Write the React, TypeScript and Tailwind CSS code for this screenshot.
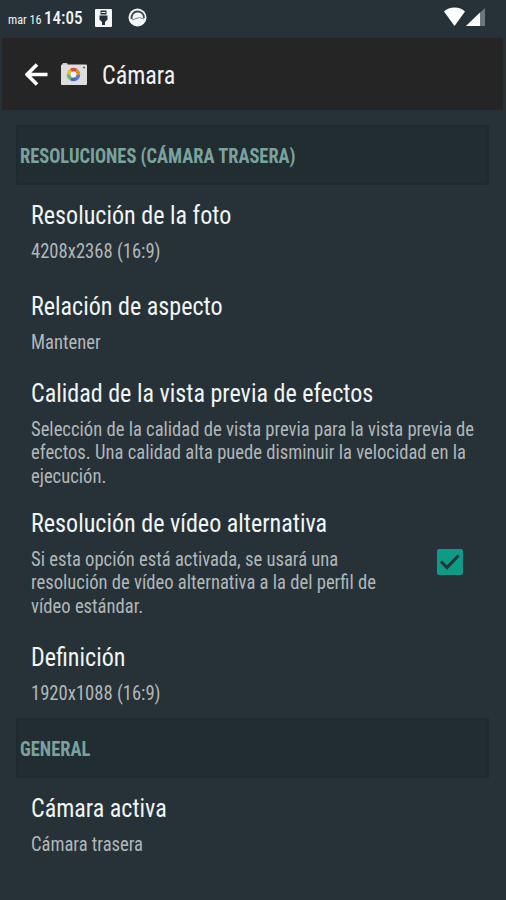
import type { ReactNode } from "react";

function Line({ children, className = "" }: { children: ReactNode; className?: string }) {
  return <span className={`block w-max origin-left whitespace-nowrap ${className}`}>{children}</span>;
}

function Section({ children }: { children: ReactNode }) {
  return (
    <div className="ml-4 flex h-[60px] w-[473px] items-center border-2 border-[#1f2a2f] bg-[#222d32] pl-[2px] pt-[1px] text-[20px] font-bold text-[#7aa39d]">
      <Line className="scale-x-[0.922]">{children}</Line>
    </div>
  );
}

type RowProps = {
  title: string;
  lines: string[];
  className?: string;
  children?: ReactNode;
};

function Row({ title, lines, className = "h-[91px] pt-4", children }: RowProps) {
  return (
    <div className={`flex justify-between pl-[31px] pr-[43px] ${className}`}>
      <div className="w-0">
        <Line className="scale-x-[0.963] text-[25px] leading-[30px] text-[#f1f5f5]">{title}</Line>
        <div className="mt-[9px] text-[20px] leading-[23.3px] text-[#b2b7b8]">
          {lines.map((text) => (
            <Line key={text} className="scale-x-[0.93]">{text}</Line>
          ))}
        </div>
      </div>
      {children}
    </div>
  );
}

function StatusBar() {
  return (
    <header className="flex h-[38px] items-start justify-between pl-2 pr-[20px] text-[#f0f3f3]">
      <div className="flex items-start">
        <span className="mt-[11px] w-[36px] origin-left scale-x-[0.94] whitespace-nowrap text-[13px] leading-[18px]">mar 16</span>
        <span className="mt-[7px] w-[51px] origin-left scale-x-[0.9] whitespace-nowrap text-[19px] font-medium leading-[22px]">14:05</span>
        <svg className="mt-[9px]" width="17" height="18" viewBox="0 0 17 18">
          <rect width="17" height="18" rx="1" fill="#f4f7f7" />
          <path d="M5.500 1.500h6v4h-6zM4.500 6.500h8v4L10 13v3H7v-3l-2.500-2.500z" fill="#263137" />
          <path d="M6.500 3.500h4" stroke="#f4f7f7" />
        </svg>
        <svg className="ml-4 mt-[8px]" width="19" height="19" viewBox="0 0 19 19">
          <circle cx="9.500" cy="9.500" r="9" fill="#f4f7f7" />
          <path d="M3.500 11C3 6.500 5.800 3.500 9.500 3.500s6.500 2.500 6.500 6.500" fill="none" stroke="#3c4a50" strokeWidth="1.800" />
          <path d="M4 11.800l7.500-2.300 4.500 1.500" fill="none" stroke="#7b878b" strokeWidth="1" />
        </svg>
      </div>
      <svg className="mt-[7px]" width="42" height="20" viewBox="0 0 42 20">
        <path d="M0 4.500C5-.8 16-.8 21 4.500L10.500 19z" fill="#fff" />
        <path d="M22 19L41 1v18z" fill="#6c777b" />
        <path d="M22 19L36 5.500V19z" fill="#fff" />
      </svg>
    </header>
  );
}

function CameraIcon() {
  return (
    <svg className="ml-[13px]" width="26" height="23" viewBox="0 0 26 23">
      <rect x="1.500" y="0" width="5" height="4" rx="1" fill="#d6c9c9" />
      <rect x="0" y="1.500" width="26" height="20.500" rx="1" fill="#dededf" />
      <circle cx="23" cy="4.500" r="1" fill="#555" />
      <g fill="none" strokeWidth="3.800">
        <circle cx="12.500" cy="11.500" r="4.800" stroke="#4c7fd0" strokeDasharray="5.200 26" />
        <circle cx="12.500" cy="11.500" r="4.800" stroke="#4a67b8" strokeDasharray="5.200 26" transform="rotate(60 12.500 11.500)" />
        <circle cx="12.500" cy="11.500" r="4.800" stroke="#72b66b" strokeDasharray="5.200 26" transform="rotate(120 12.500 11.500)" />
        <circle cx="12.500" cy="11.500" r="4.800" stroke="#e5bd3d" strokeDasharray="5.200 26" transform="rotate(180 12.500 11.500)" />
        <circle cx="12.500" cy="11.500" r="4.800" stroke="#d94b3f" strokeDasharray="5.200 26" transform="rotate(240 12.500 11.500)" />
        <circle cx="12.500" cy="11.500" r="4.800" stroke="#e38a36" strokeDasharray="5.200 26" transform="rotate(300 12.500 11.500)" />
      </g>
      <circle cx="12.500" cy="11.500" r="2.900" fill="#f4f4f4" />
    </svg>
  );
}

export default function App() {
  return (
    <main className="h-[900px] w-[506px] overflow-hidden bg-[#263238] font-['Roboto_Condensed',Roboto,sans-serif] [font-stretch:75%]">
      <StatusBar />
      <div className="ml-[2px] mr-[3px] mb-[15px] flex h-[72px] items-center bg-[#242524] pl-[23px]">
        <svg width="23" height="23" viewBox="0 0 23 23" fill="none" stroke="#fff" strokeWidth="3.600">
          <path d="M22.500 11.500H3M12 1.500l-10 10 10 10" />
        </svg>
        <CameraIcon />
        <Line className="ml-[15px] scale-x-[0.963] pt-[4px] text-[25px] leading-[30px] text-[#f1f3f3]">Cámara</Line>
      </div>
      <Section>RESOLUCIONES (CÁMARA TRASERA)</Section>
      <Row title="Resolución de la foto" lines={["4208x2368 (16:9)"]} />
      <Row title="Relación de aspecto" lines={["Mantener"]} />
      <Row
        title="Calidad de la vista previa de efectos"
        className="h-[130px] pt-3"
        lines={[
          "Selección de la calidad de vista previa para la vista previa de",
          "efectos. Una calidad alta puede disminuir la velocidad en la",
          "ejecución.",
        ]}
      />
      <Row
        title="Resolución de vídeo alternativa"
        className="h-[130px] pt-3"
        lines={[
          "Si esta opción está activada, se usará una",
          "resolución de vídeo alternativa a la del perfil de",
          "vídeo estándar.",
        ]}
      >
        <svg className="mt-10" width="26" height="26" viewBox="0 0 26 26">
          <rect width="26" height="26" rx="2" fill="#0d9a86" />
          <path d="M4 12.500l6 6L21.500 6.500" fill="none" stroke="#263238" strokeWidth="3" />
        </svg>
      </Row>
      <Row title="Definición" lines={["1920x1088 (16:9)"]} />
      <Section>GENERAL</Section>
      <Row title="Cámara activa" lines={["Cámara trasera"]} />
    </main>
  );
}
